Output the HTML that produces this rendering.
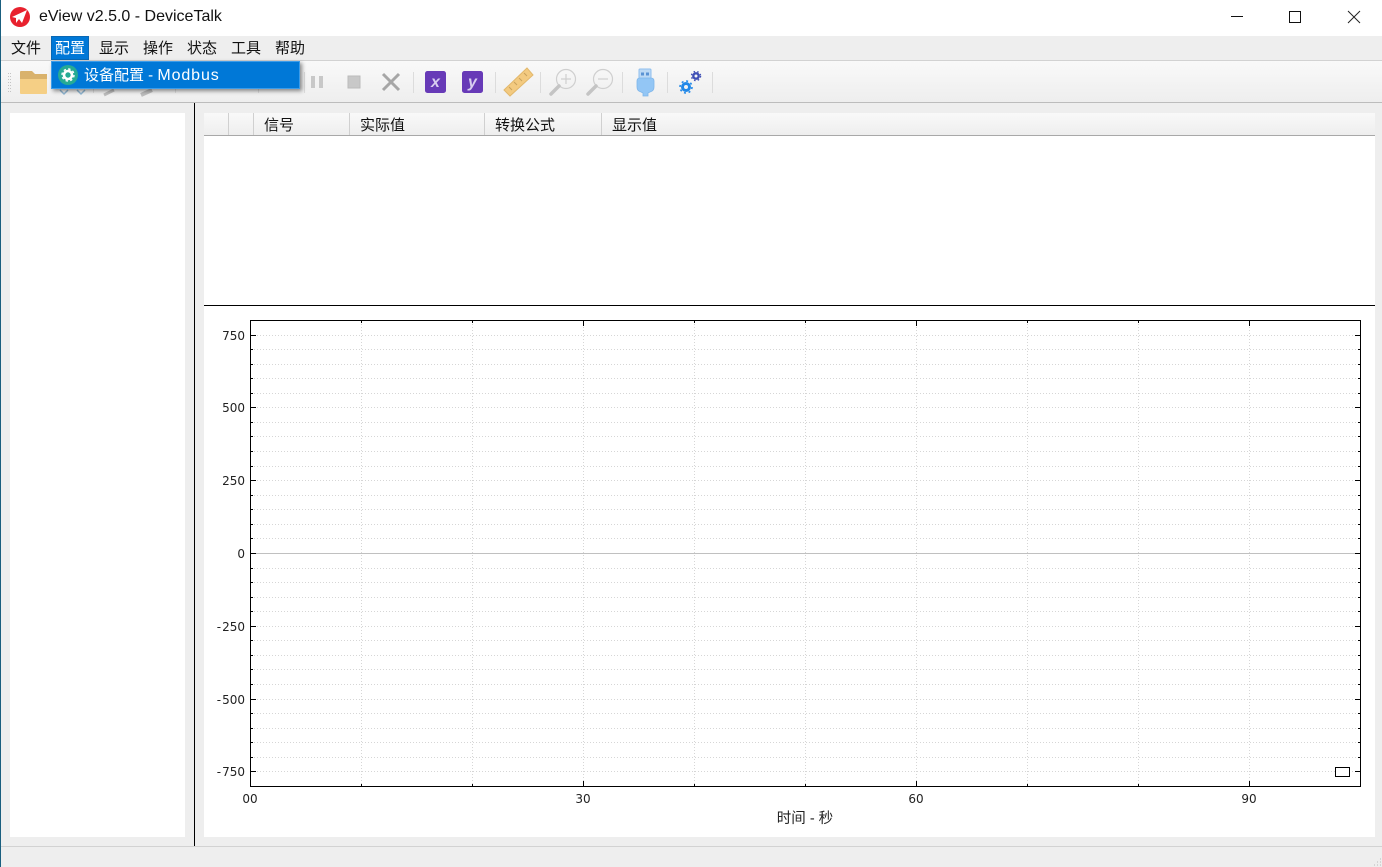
<!DOCTYPE html>
<html><head><meta charset="utf-8"><style>
*{box-sizing:border-box}
html,body{margin:0;padding:0;width:1382px;height:867px;overflow:hidden;background:#eee;font-family:"Liberation Sans","Noto Sans CJK SC",sans-serif;color:#111}
div{position:absolute}
.m{top:38px;font-size:15px;line-height:21px;white-space:nowrap}
.h{top:115px;font-size:15px;line-height:21px;white-space:nowrap}
svg{position:absolute;left:0;top:0}
</style></head><body>
<div style="left:0;top:0;width:1382px;height:36px;background:#fff"></div>
<div style="left:0;top:60px;width:1382px;height:1px;background:#d2d2d2"></div>
<div style="left:0;top:61px;width:1382px;height:41px;background:linear-gradient(#f9f9f9,#eee)"></div>
<div style="left:0;top:102px;width:1382px;height:1px;background:#bcbcbc"></div>
<div style="left:10px;top:113px;width:175px;height:724px;background:#fff"></div>
<div style="left:194px;top:103px;width:1px;height:743px;background:#000"></div>
<div style="left:204px;top:113px;width:1171px;height:724px;background:#fff"></div>
<div style="left:204px;top:113px;width:1171px;height:22px;background:linear-gradient(#f9f9f9,#eee)"></div>
<div style="left:204px;top:135px;width:1171px;height:1px;background:#a8a8a8"></div>
<div style="left:228px;top:113px;width:1px;height:22px;background:#d0d0d0"></div>
<div style="left:253px;top:113px;width:1px;height:22px;background:#d0d0d0"></div>
<div style="left:349px;top:113px;width:1px;height:22px;background:#d0d0d0"></div>
<div style="left:484px;top:113px;width:1px;height:22px;background:#d0d0d0"></div>
<div style="left:601px;top:113px;width:1px;height:22px;background:#d0d0d0"></div>
<div style="left:204px;top:305px;width:1171px;height:1px;background:#000"></div>
<div style="left:0;top:846px;width:1382px;height:1px;background:#d2d2d2"></div>
<div style="left:0;top:0;width:1px;height:867px;background:#1a5f7f"></div>

<div style="left:39px;top:7px;font-size:16px;line-height:20px;white-space:nowrap">eView v2.5.0 - DeviceTalk</div>

<div class="m" style="left:11px">文件</div>
<div style="left:51px;top:36px;width:38px;height:24px;background:#0078d7;border:1px solid #0a68b4"></div>
<div class="m" style="left:55px;color:#fff">配置</div>
<div class="m" style="left:99px">显示</div>
<div class="m" style="left:143px">操作</div>
<div class="m" style="left:187px">状态</div>
<div class="m" style="left:231px">工具</div>
<div class="m" style="left:275px">帮助</div>

<div class="h" style="left:264px">信号</div>
<div class="h" style="left:360px">实际值</div>
<div class="h" style="left:495px">转换公式</div>
<div class="h" style="left:612px">显示值</div>

<svg width="1382" height="867" viewBox="0 0 1382 867">
<!-- logo -->
<circle cx="20" cy="17" r="10" fill="#e8212e"/>
<path d="M12 17L27 10L22 23L19 19L16 23V18Z" fill="#fff"/>
<!-- window controls -->
<path d="M1231 16.500H1243" stroke="#111" fill="none"/>
<rect x="1289.500" y="11.500" width="11" height="11" stroke="#111" fill="none"/>
<path d="M1348 11L1360 23M1360 11L1348 23" stroke="#222" fill="none"/>
<!-- toolbar -->
<path d="M8.500 73V92M10.500 73V92" stroke="#c4c4c4" stroke-dasharray="1 2" fill="none"/>
<path d="M20 93V72Q20 71 21 71H32L35 74H47V93Z" fill="#d9b26c"/>
<path d="M21 94Q20 94 20 93V79H47V93Q47 94 46 94Z" fill="#f5cf85"/>
<path d="M93.500 72V93M175.500 72V93M258.500 72V93M304.500 72V93M413.500 72V93M495.500 72V93M540.500 72V93M622.500 72V93M667.500 72V93M712.500 72V93" stroke="#dcdcdc" fill="none"/>
<path d="M60 90L64 94L68 90M77 90L81 94L85 90" stroke="#8fb6d2" stroke-width="1.500" fill="none"/>
<path d="M104 95L114 90" stroke="#bdbdbd" stroke-width="3" fill="none"/>
<path d="M141 95L152 90" stroke="#bdbdbd" stroke-width="4" fill="none"/>
<!-- pause, stop, x -->
<rect x="311" y="76" width="4" height="12" fill="#c8c8c8"/><rect x="319" y="76" width="4" height="12" fill="#c8c8c8"/>
<rect x="348" y="76" width="12" height="12" fill="#c8c8c8" stroke="#bbb"/>
<path d="M383 74L399 90M399 74L383 90" stroke="#a6a6a6" stroke-width="3" fill="none"/>
<rect x="425" y="71" width="21" height="22" rx="2.500" fill="#673ab7"/>
<text x="435.500" y="87" font-family="Liberation Sans" font-size="16" font-weight="700" font-style="italic" fill="#d8cdf0" text-anchor="middle">x</text>
<rect x="462" y="71" width="21" height="22" rx="2.500" fill="#673ab7"/>
<text x="472.500" y="87" font-family="Liberation Sans" font-size="16" font-weight="700" font-style="italic" fill="#d8cdf0" text-anchor="middle">y</text>
<!-- ruler -->
<path d="M504 90L527 68L533 75L510 96Z" fill="#f3ca80" stroke="#e2b86c"/>
<path d="M509 87L512 90M514 82L517 85M519 78L522 81M524 73L527 76" stroke="#c9a25c" fill="none"/>
<!-- zoom in/out -->
<g fill="none" stroke="#cfcfcf" stroke-width="1.200">
<circle cx="566" cy="79" r="9.500"/><path d="M561 79H571M566 74V84"/>
<circle cx="603" cy="79" r="9.500"/><path d="M598 79H608"/>
</g>
<path d="M551 94L559 86M588 94L596 86" stroke="#c4c4c4" stroke-width="3.500" stroke-linecap="round" fill="none"/>
<!-- usb -->
<path d="M639 78V70Q639 69 640 69H650Q651 69 651 70V78" fill="#bcd9f5" stroke="#8fbfee"/>
<rect x="641" y="72.500" width="3" height="3" fill="#5b93d4"/><rect x="646" y="72.500" width="3" height="3" fill="#5b93d4"/>
<path d="M637 81Q637 78 640 78H651Q654 78 654 81V87Q654 91 650 92L648 93V96H643V93L641 92Q637 91 637 87Z" fill="#93c6f5" stroke="#7fb6ea" stroke-width=".8"/>
<!-- gears -->
<circle cx="686" cy="87" r="3.500" fill="none" stroke="#2188e8" stroke-width="3"/>
<circle cx="686" cy="87" r="6" fill="none" stroke="#2188e8" stroke-width="1.600" stroke-dasharray="2 2.700"/>
<circle cx="696" cy="76" r="2.700" fill="none" stroke="#3f4fb5" stroke-width="2.400"/>
<circle cx="696" cy="76" r="4.600" fill="none" stroke="#3f4fb5" stroke-width="1.300" stroke-dasharray="1.600 2.200"/>

<!-- plot grid -->
<path d="M251 335.500H1360M251 349.500H1360M251 364.500H1360M251 378.500H1360M251 393.500H1360M251 407.500H1360M251 422.500H1360M251 436.500H1360M251 451.500H1360M251 466.500H1360M251 480.500H1360M251 495.500H1360M251 509.500H1360M251 524.500H1360M251 538.500H1360M251 568.500H1360M251 582.500H1360M251 597.500H1360M251 611.500H1360M251 626.500H1360M251 640.500H1360M251 655.500H1360M251 669.500H1360M251 684.500H1360M251 699.500H1360M251 713.500H1360M251 728.500H1360M251 742.500H1360M251 757.500H1360M251 771.500H1360" stroke="#d6d6d6" stroke-dasharray="1 2" fill="none"/>
<path d="M361.500 321V786M472.500 321V786M583.500 321V786M694.500 321V786M805.500 321V786M916.500 321V786M1027.500 321V786M1138.500 321V786M1249.500 321V786" stroke="#d6d6d6" stroke-dasharray="1 2" fill="none"/>
<path d="M251 553.500H1360" stroke="#c0c0c0" fill="none"/>
<rect x="250.500" y="320.500" width="1110" height="466" fill="none" stroke="#000"/>
<!-- ticks -->
<path d="M251 335.500H256M251 407.500H256M251 480.500H256M251 553.500H256M251 626.500H256M251 699.500H256M251 771.500H256M1355 335.500H1360M1355 407.500H1360M1355 480.500H1360M1355 553.500H1360M1355 626.500H1360M1355 699.500H1360M1355 771.500H1360" stroke="#000" fill="none"/>
<path d="M251 349.500H253M251 364.500H253M251 378.500H253M251 393.500H253M251 422.500H253M251 436.500H253M251 451.500H253M251 466.500H253M251 495.500H253M251 509.500H253M251 524.500H253M251 538.500H253M251 568.500H253M251 582.500H253M251 597.500H253M251 611.500H253M251 640.500H253M251 655.500H253M251 669.500H253M251 684.500H253M251 713.500H253M251 728.500H253M251 742.500H253M251 757.500H253M1358 349.500H1360M1358 364.500H1360M1358 378.500H1360M1358 393.500H1360M1358 422.500H1360M1358 436.500H1360M1358 451.500H1360M1358 466.500H1360M1358 495.500H1360M1358 509.500H1360M1358 524.500H1360M1358 538.500H1360M1358 568.500H1360M1358 582.500H1360M1358 597.500H1360M1358 611.500H1360M1358 640.500H1360M1358 655.500H1360M1358 669.500H1360M1358 684.500H1360M1358 713.500H1360M1358 728.500H1360M1358 742.500H1360M1358 757.500H1360" stroke="#000" fill="none"/>
<path d="M583.500 781V786M916.500 781V786M1249.500 781V786M583.500 321V326M916.500 321V326M1249.500 321V326" stroke="#000" fill="none"/>
<path d="M361.500 784V786M472.500 784V786M694.500 784V786M805.500 784V786M1027.500 784V786M1138.500 784V786M361.500 321V323M472.500 321V323M694.500 321V323M805.500 321V323M1027.500 321V323M1138.500 321V323" stroke="#000" fill="none"/>
<rect x="1335.500" y="767.500" width="14" height="9" fill="#fff" stroke="#000"/>
<!-- labels -->
<g font-family="DejaVu Sans" font-size="12" fill="#222" text-anchor="end">
<text x="245" y="340">750</text><text x="245" y="412">500</text><text x="245" y="485">250</text><text x="245" y="558">0</text><text x="245" y="631"><tspan letter-spacing="1">-</tspan>250</text><text x="245" y="704"><tspan letter-spacing="1">-</tspan>500</text><text x="245" y="776"><tspan letter-spacing="1">-</tspan>750</text>
</g>
<g font-family="DejaVu Sans" font-size="12" fill="#222" text-anchor="middle">
<text x="250" y="803">00</text><text x="583" y="803">30</text><text x="916" y="803">60</text><text x="1249" y="803">90</text>
</g>
<text x="805" y="823" font-family="Liberation Sans,Noto Sans CJK SC,sans-serif" font-size="14.500" fill="#222" text-anchor="middle">时间 - 秒</text>
<path d="M1380 859h1M1377 862h1M1380 862h1M1374 865h1M1377 865h1M1380 865h1" stroke="#bbb" fill="none"/>
</svg>

<!-- popup -->
<div style="left:51px;top:61px;width:249px;height:28px;background:#0078d7;border:1px solid #3c9cea;box-shadow:2px 2px 4px rgba(0,0,0,.45)"></div>
<svg width="1382" height="867" viewBox="0 0 1382 867">
<circle cx="68" cy="75" r="10" fill="#26ab94"/>
<circle cx="68" cy="75" r="4" fill="none" stroke="#fff" stroke-width="2.600"/>
<circle cx="68" cy="75" r="6" fill="none" stroke="#fff" stroke-width="1.400" stroke-dasharray="2.400 2.310"/>
</svg>
<div style="left:84px;top:65px;font-size:15px;line-height:21px;color:#fff;white-space:nowrap">设备配置 - <span style="font-size:16px;letter-spacing:.9px">Modbus</span></div>
</body></html>
